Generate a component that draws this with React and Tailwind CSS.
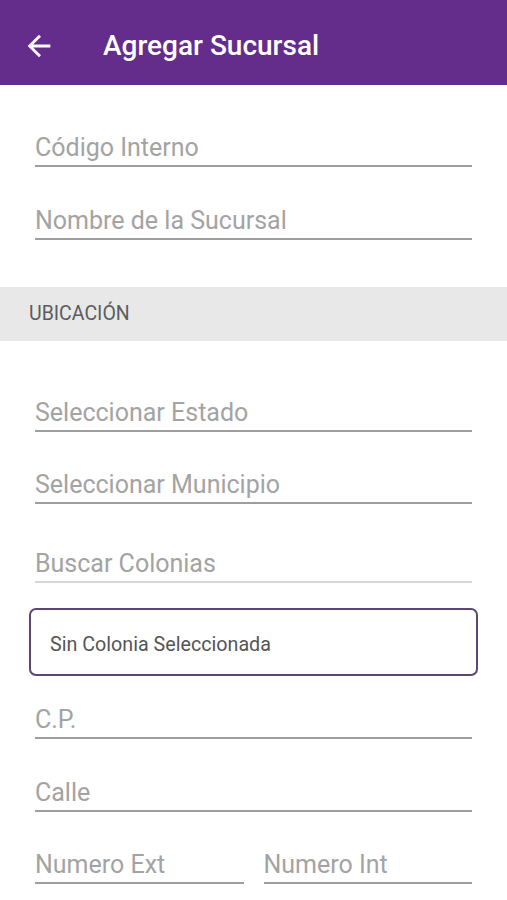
export default function App() {
  return (
    <div className="min-h-screen w-full bg-white" style={{ fontFamily: "Roboto, 'Noto Sans', sans-serif" }}>
      <header className="flex h-[85px] items-center bg-[#642d8c] pt-[7px]">
        <svg viewBox="0 0 24 24" className="ml-[22px] h-[34px] w-[34px] fill-white">
          <path d="M20 11H7.83l5.59-5.59L12 4l-8 8 8 8 1.41-1.41L7.83 13H20v-2z" />
        </svg>
        <h1 className="ml-[47px] text-[28px] font-medium leading-none text-white">Agregar Sucursal</h1>
      </header>

      <div className="px-[35px]">
        <Field label="Código Interno" className="mt-[48px]" />
        <Field label="Nombre de la Sucursal" className="mt-[39px]" />
      </div>

      <div className="mt-[47px] flex h-[54px] items-center bg-[#e8e8e8] px-[29px]">
        <span className="text-[19.5px] text-[#5c5c5c]">UBICACIÓN</span>
      </div>

      <div className="px-[35px]">
        <Field label="Seleccionar Estado" className="mt-[57px]" />
        <Field label="Seleccionar Municipio" className="mt-[38px]" />
        <Field label="Buscar Colonias" className="mt-[45px]" line="border-[#d6d6d6]" />

        <div className="-mx-[6px] mt-[25px] flex h-[68px] items-center rounded-[7px] border-2 border-[#5b4677] pl-[19px] pt-[5px]">
          <span className="text-[19.7px] text-[#555555]">Sin Colonia Seleccionada</span>
        </div>

        <Field label="C.P." className="mt-[29px]" />
        <Field label="Calle" className="mt-[39px]" />
        <div className="mt-[38px] flex gap-[20px]">
          <Field label="Numero Ext" className="flex-1" />
          <Field label="Numero Int" className="flex-1" />
        </div>
      </div>
    </div>
  );
}

function Field({ label, className = "", line = "border-[#9e9e9e]" }) {
  return (
    <div className={`border-b-2 pb-[3px] ${line} ${className}`}>
      <div className="text-[25px] leading-[29px] text-[#a3a3a3]">{label}</div>
    </div>
  );
}
